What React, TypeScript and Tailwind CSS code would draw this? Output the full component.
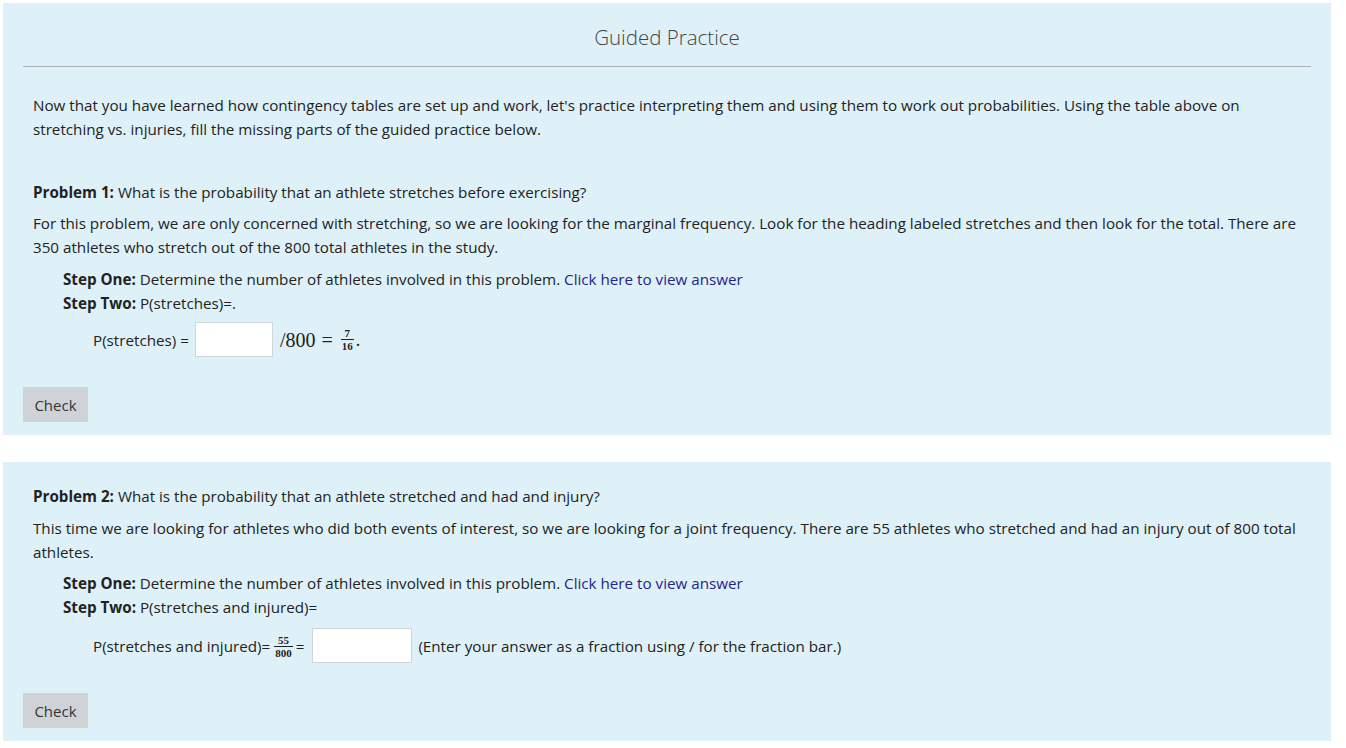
import React from "react";

const Frac = ({ n, d }: { n: string; d: string }) => (
  <span className="mx-[2px] inline-flex flex-col items-center align-middle font-['Liberation_Serif',serif] text-[11px] leading-[10px] font-bold">
    <span className="px-[1px] pb-[1px]">{n}</span>
    <span className="border-t border-[#222] px-[1px] pt-[1px]">{d}</span>
  </span>
);

const CheckButton = () => (
  <button className="h-[35px] w-[65px] bg-[#cfd3d8] text-[15px] text-[#333]">Check</button>
);

export default function App() {
  return (
    <div className="min-h-screen bg-white p-[3px] pr-[15px] font-['Open_Sans',sans-serif] text-[15.2px] leading-[24px] text-[#222]">
      {/* Problem 1 panel */}
      <section className="bg-[#dff1f8] px-[20px] pt-[19px] pb-[13px]">
        <h2 className="text-center text-[20.5px] leading-[30px] font-light text-[#444]">Guided Practice</h2>
        <hr className="mt-[14px] border-t border-[#a9b0b4]" />
        <div className="px-[10px]">
          <p className="mt-[26px]">
            Now that you have learned how contingency tables are set up and work, let's practice interpreting them and
            using them to work out probabilities. Using the table above on stretching vs. injuries, fill the missing parts
            of the guided practice below.
          </p>
          <p className="mt-[39px]">
            <b>Problem 1:</b> What is the probability that an athlete stretches before exercising?
          </p>
          <p className="mt-[7px]">
            For this problem, we are only concerned with stretching, so we are looking for the marginal frequency. Look for
            the heading labeled stretches and then look for the total. There are 350 athletes who stretch out of the 800
            total athletes in the study.
          </p>
          <div className="mt-[8px] pl-[30px]">
            <div>
              <b>Step One:</b> Determine the number of athletes involved in this problem.{" "}
              <a className="text-[#23238c]">Click here to view answer</a>
            </div>
            <div>
              <b>Step Two:</b> P(stretches)=.
            </div>
            <div className="mt-[7px] flex items-center pl-[30px]">
              <span>P(stretches) =</span>
              <input className="ml-[6px] h-[35px] w-[78px] border border-[#cfd6da] bg-white" />
              <span className="ml-[7px] font-['Liberation_Serif',serif] text-[20px]">/800</span>
              <span className="mx-[6px] font-['Liberation_Serif',serif] text-[20px]">=</span>
              <Frac n="7" d="16" />
              <span className="font-['Liberation_Serif',serif] text-[18px]">.</span>
            </div>
          </div>
        </div>
        <div className="mt-[30px]">
          <CheckButton />
        </div>
      </section>

      {/* Problem 2 panel */}
      <section className="mt-[27px] bg-[#dff1f8] px-[20px] pt-[22px] pb-[13px]">
        <div className="px-[10px]">
          <p>
            <b>Problem 2:</b> What is the probability that an athlete stretched and had and injury?
          </p>
          <p className="mt-[8px]">
            This time we are looking for athletes who did both events of interest, so we are looking for a joint
            frequency. There are 55 athletes who stretched and had an injury out of 800 total athletes.
          </p>
          <div className="mt-[7px] pl-[30px]">
            <div>
              <b>Step One:</b> Determine the number of athletes involved in this problem.{" "}
              <a className="text-[#23238c]">Click here to view answer</a>
            </div>
            <div>
              <b>Step Two:</b> P(stretches and injured)=
            </div>
            <div className="mt-[9px] flex items-center pl-[30px]">
              <span>P(stretches and injured)=</span>
              <span className="ml-[2px]">
                <Frac n="55" d="800" />
              </span>
              <span className="ml-[1px]">=</span>
              <input className="ml-[8px] h-[35px] w-[100px] border border-[#cfd6da] bg-white" />
              <span className="ml-[6px]">(Enter your answer as a fraction using / for the fraction bar.)</span>
            </div>
          </div>
        </div>
        <div className="mt-[30px]">
          <CheckButton />
        </div>
      </section>
    </div>
  );
}
